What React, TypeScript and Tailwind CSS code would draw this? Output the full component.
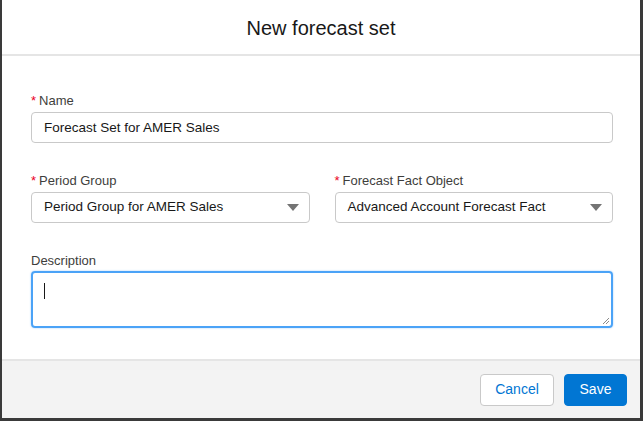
export default function App() {
  return (
    <div className="w-[643px] h-[421px] bg-[#3a3a3a] overflow-hidden font-['Liberation_Sans',Arial,sans-serif] text-[#181818]">
      <div className="ml-[2px] mr-[3px] mb-[3px] h-[418px] bg-white flex flex-col">
        <div className="h-[56px] flex items-center justify-center border-b-2 border-[#e5e5e5]">
          <h2 className="text-[20px] leading-none mt-[2px]">New forecast set</h2>
        </div>
        <div className="flex-1 pl-[29px] pr-[27px] pt-[37px]">
          <Label required text="Name" />
          <input
            readOnly
            value="Forecast Set for AMER Sales"
            className="w-full h-[31px] mt-[3px] border border-[#c9c9c9] rounded-[4px] px-[12px] text-[13.5px] outline-none"
          />
          <div className="flex gap-[25px] mt-[30px]">
            <div className="flex-1">
              <Label required text="Period Group" />
              <Select value="Period Group for AMER Sales" />
            </div>
            <div className="flex-1">
              <Label required text="Forecast Fact Object" />
              <Select value="Advanced Account Forecast Fact" />
            </div>
          </div>
          <div className="mt-[30px]">
            <Label text="Description" />
            <div className="relative mt-[2px] h-[57px] border-2 border-[#4ba3f7] rounded-[4px] shadow-[0_0_2px_#9fcaf8]">
              <div className="absolute left-[11px] top-[10px] w-px h-[16px] bg-[#181818]" />
              <svg className="absolute right-[1px] bottom-[1px]" width="8" height="8" viewBox="0 0 8 8">
                <path d="M7 1 L1 7 M7 4 L4 7" stroke="#8a8a8a" strokeWidth="1" />
              </svg>
            </div>
          </div>
        </div>
        <div className="h-[59px] bg-[#f3f3f3] border-t-2 border-[#e5e5e5] flex items-center justify-end gap-[10px] pr-[13px]">
          <button className="h-[32px] w-[74px] bg-white border border-[#c9c9c9] rounded-[4px] text-[#0176d3] text-[14px]">
            Cancel
          </button>
          <button className="h-[32px] w-[63px] bg-[#0176d3] border border-[#0176d3] rounded-[4px] text-white text-[14px]">
            Save
          </button>
        </div>
      </div>
    </div>
  );
}

function Label({ text, required }: { text: string; required?: boolean }) {
  return (
    <div className="text-[13px] text-[#3e3e3c] leading-[16px] flex items-center">
      {required && <span className="text-[#ea001e] mr-[3px]">*</span>}
      {text}
    </div>
  );
}

function Select({ value }: { value: string }) {
  return (
    <div className="mt-[3px] h-[31px] border border-[#c9c9c9] rounded-[4px] pl-[12px] pr-[10px] flex items-center justify-between text-[13.5px]">
      <span>{value}</span>
      <svg width="12" height="8" viewBox="0 0 12 8">
        <path d="M0 0 H12 L6 7 Z" fill="#747474" />
      </svg>
    </div>
  );
}
